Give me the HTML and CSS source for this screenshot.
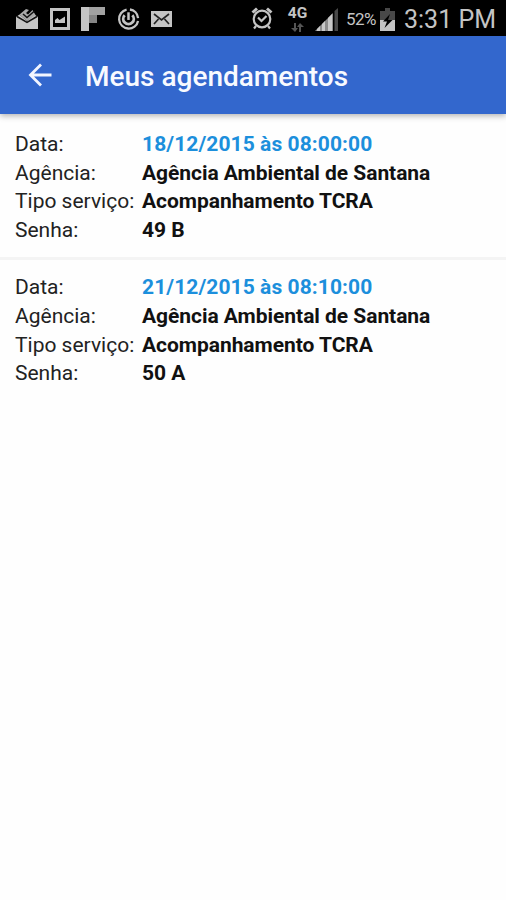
FILE: index.html
```html
<!DOCTYPE html>
<html lang="pt-BR">
<head>
<meta charset="utf-8">
<title>Meus agendamentos</title>
<link rel="stylesheet" href="styles.css">
</head>
<body>
<div class="statusbar">
  <div class="notifications">
    <svg width="22" height="22" viewBox="0 0 22 22"><path fill="#c4c4c4" d="M0 9l3.500-2.500L11 13l7.500-6.500L22 9v12H0z"/><path fill="#a8a8a8" d="M3.500 6.500L10 1l3 1-3 3 2 1.500L16.500 2l3 5L11 13z"/><path fill="none" stroke="#111" stroke-width="1.500" d="M1 8.500l10 6L21 8.500M7 6l4 3.500L18.500 3"/></svg>
    <svg width="20" height="22" viewBox="0 0 20 22"><path fill="none" stroke="#c4c4c4" stroke-width="3" d="M1.500 1.500h17v19h-17z"/><path fill="#c4c4c4" d="M5 15v-3l2.500-2 2 2L15 8.500V15z"/></svg>
    <svg width="24" height="24" viewBox="0 0 24 24"><path fill="#c4c4c4" d="M0 0h8v24H0z"/><path fill="#a2a2a2" d="M8 0h16v8H8z"/><path fill="#858585" d="M8 8h8v8H8z"/></svg>
    <svg width="23" height="24" viewBox="0 0 24 24"><g fill="none" stroke="#c4c4c4" stroke-width="2.400"><path d="M13.500 2.100A10 10 0 0 1 22 11M22 14A10 10 0 1 1 10 2.200"/><path stroke-width="3" d="M8 8a5.500 5.500 0 1 0 8 0"/><path stroke-width="2.600" d="M12 5v8"/></g></svg>
    <svg width="21" height="16" viewBox="0 0 21 16"><path fill="#c4c4c4" d="M0 0h21v16H0z"/><path fill="none" stroke="#222" stroke-width="1.700" d="M3 3l7.500 6L18 3M3 13l4.500-5M18 13l-4.500-5"/></svg>
  </div>
  <div class="system">
    <svg class="alarm" width="22" height="24" viewBox="0 0 22 24"><g fill="none" stroke="#c4c4c4" stroke-width="2.200"><circle cx="11" cy="13" r="8.300"/><path stroke-width="3" d="M1.500 6.500l4.500-4M16 2.500l4.500 4"/><path d="M7 11.500l3.500 3.500 5-5M5 20l-2 2.500M17 20l2 2.500"/></g></svg>
    <div class="network"><span>4G</span><svg width="13" height="9" viewBox="0 0 13 9"><path fill="#555" d="M3 0h2v5h2L4 9 0 5h3zM8 9h2V4h3L9 0 6 4h2z"/></svg></div>
    <svg class="signal" width="23" height="23" viewBox="0 0 23 23"><path fill="#8c8c8c" d="M0 23L18 5v18z"/><path fill="#c8c8c8" d="M2 23v-2l3-3v5zM7 23v-7l3-3v10zM13 23V10l4-4v17z"/><path fill="#484848" d="M19.500 3L23 0v23h-3.500z"/></svg>
    <span class="percent">52%</span>
    <svg class="battery" width="15" height="23" viewBox="0 0 15 23"><path fill="#484848" d="M5 0h5v3h5v20H0V3h5z"/><path fill="#c4c4c4" d="M0 12h15v11H0z"/><path fill="#000" d="M10 6L3 13.500h4L4.500 20l8-8H8z"/></svg>
    <span class="clock">3:31 PM</span>
  </div>
</div>
<header class="appbar">
  <svg width="24" height="24" viewBox="0 0 24 24"><path fill="none" stroke="#f2f5ff" stroke-width="2.800" d="M23.500 12H3M13 1.500L2.500 12 13 22.500"/></svg>
  <h1>Meus agendamentos</h1>
</header>
<main>
  <dl class="booking">
    <dt>Data:</dt><dd class="date">18/12/2015 às 08:00:00</dd>
    <dt>Agência:</dt><dd>Agência Ambiental de Santana</dd>
    <dt>Tipo serviço:</dt><dd>Acompanhamento TCRA</dd>
    <dt>Senha:</dt><dd>49 B</dd>
  </dl>
  <dl class="booking">
    <dt>Data:</dt><dd class="date">21/12/2015 às 08:10:00</dd>
    <dt>Agência:</dt><dd>Agência Ambiental de Santana</dd>
    <dt>Tipo serviço:</dt><dd>Acompanhamento TCRA</dd>
    <dt>Senha:</dt><dd>50 A</dd>
  </dl>
</main>
</body>
</html>
```
FILE: styles.css
```css
* { box-sizing: border-box; }
body { margin: 0; min-height: 900px; background: #fefefe; font-family: Roboto, "Liberation Sans", sans-serif; color: #111; }
svg { display: block; flex: none; }
.statusbar { display: flex; justify-content: space-between; height: 36px; padding: 0 12px 0 16px; background: #000; color: #c4c4c4; white-space: nowrap; }
.notifications { display: flex; align-items: center; gap: 11.5px; height: 37px; }
.system { display: flex; align-items: center; height: 38px; }
.alarm { margin-right: 14px; margin-top: -2px; }
.network { display: flex; flex-direction: column; align-items: center; width: 21px; margin-right: 7px; font-size: 15.5px; font-weight: 700; line-height: 13px; }
.network span { height: 16px; }
.signal { margin-right: 8px; }
.percent { width: 33px; margin-right: 1px; font-size: 17px; letter-spacing: -0.5px; }
.battery { margin-right: 9px; }
.clock { width: 90px; font-size: 25px; line-height: 38px; padding-top: 1px; }
.appbar { display: flex; align-items: center; height: 78px; padding-left: 28px; background: #3367cd; box-shadow: 0 2px 6px rgba(0, 0, 0, 0.3); }
.appbar h1 { margin: 4px 0 0 33px; color: #f8faff; font-size: 28px; font-weight: 500; line-height: 36px; }
.booking { display: grid; grid-template-columns: 127px 1fr; grid-auto-rows: 28.7px; margin: 0; padding: 16px 15px 13px; height: 143.4px; font-size: 21px; line-height: 28.7px; white-space: nowrap; }
.booking + .booking { border-top: 3px solid #f4f4f4; padding-top: 13px; }
.booking dt { color: #222; }
.booking dd { margin: 0; font-weight: 700; letter-spacing: -0.04px; }
.booking .date { color: #1c8fdc; letter-spacing: 0.08px; }
```
